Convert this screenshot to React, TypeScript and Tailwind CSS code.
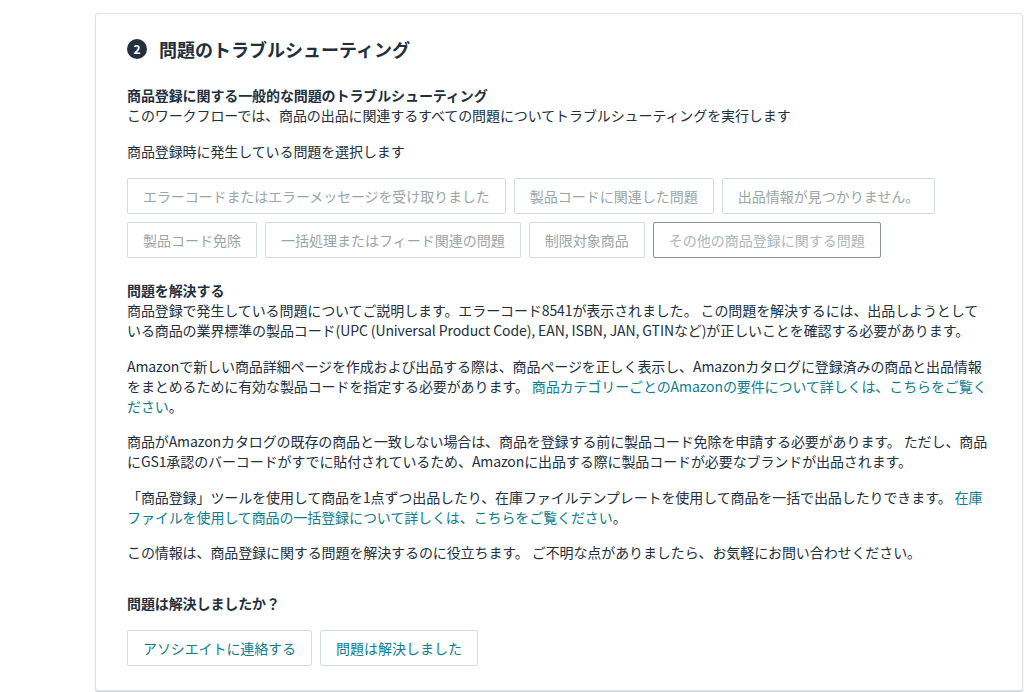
import React from 'react';

const FONT = "font-['Noto_Sans_CJK_JP','Noto_Sans',sans-serif]";

const optionsA = ['製品コードに関連した問題', '出品情報が見つかりません。'];
const optionsB = ['製品コード免除', '一括処理またはフィード関連の問題', '制限対象商品'];

const Option: React.FC<{ label: string; selected?: boolean; tight?: boolean }> = ({ label, selected, tight }) => (
  <button
    className={`h-[36px] px-[15px] rounded-[2px] border text-[14px] leading-[20px] whitespace-nowrap bg-white ${
      tight ? 'tracking-[-0.1px]' : 'tracking-normal'
    } ${selected ? 'border-[#879596] text-[#aab7b8]' : 'border-[#d5dbdb] text-[#9aa5a6]'}`}
  >
    {label}
  </button>
);

const A: React.FC<{ children: React.ReactNode }> = ({ children }) => (
  <a className="text-[#0d7d8c]">{children}</a>
);

const App: React.FC = () => {
  return (
    <div className={`w-[1024px] h-[692px] bg-white overflow-hidden pl-[95px] pt-[13px] ${FONT}`}>
      <div className="w-[928px] h-[678px] bg-white border border-[#dfe3e3] rounded-[3px] shadow-[0_1px_1px_rgba(0,28,36,0.2)] pl-[31px] pt-[23px] text-[14px] leading-[20px] tracking-[-0.1px] text-[#16191f]">
        {/* Step header */}
        <div className="flex items-center gap-[12px] h-[24px]">
          <div className="w-[20px] h-[20px] rounded-full bg-[#232f3e] text-white text-[12px] leading-[20px] font-bold text-center">2</div>
          <h2 className="text-[18px] leading-[24px] font-semibold tracking-normal text-[#232f3e]">問題のトラブルシューティング</h2>
        </div>

        <div className="mt-[24px]">
          <div className="font-bold text-[#232f3e]">商品登録に関する一般的な問題のトラブルシューティング</div>
          <div className="text-[#232f3e]">このワークフローでは、商品の出品に関連するすべての問題についてトラブルシューティングを実行します</div>
        </div>

        <p className="mt-[16px] text-[#232f3e]">商品登録時に発生している問題を選択します</p>

        <div className="mt-[17px] flex flex-col gap-[8px]">
          <div className="flex gap-[8px]">
            <Option label="エラーコードまたはエラーメッセージを受け取りました" tight />
            {optionsA.map(o => <Option key={o} label={o} />)}
          </div>
          <div className="flex gap-[8px]">
            {optionsB.map(o => <Option key={o} label={o} />)}
            <Option label="その他の商品登録に関する問題" selected />
          </div>
        </div>

        {/* Answer */}
        <div className="mt-[22px] text-[#232f3e] space-y-[15.5px]">
          <div>
            <div className="font-bold">問題を解決する</div>
            商品登録で発生している問題についてご説明します。エラーコード8541が表示されました。 この問題を解決するには、出品しようとして<br />
            いる商品の業界標準の製品コード(UPC (Universal Product Code), EAN, ISBN, JAN, GTINなど)が正しいことを確認する必要があります。
          </div>
          <div>
            Amazonで新しい商品詳細ページを作成および出品する際は、商品ページを正しく表示し、Amazonカタログに登録済みの商品と出品情報<br />
            をまとめるために有効な製品コードを指定する必要があります。 <A>商品カテゴリーごとのAmazonの要件について詳しくは、こちらをご覧く<br />ださい</A>。
          </div>
          <div>
            商品がAmazonカタログの既存の商品と一致しない場合は、商品を登録する前に製品コード免除を申請する必要があります。 ただし、商品<br />
            にGS1承認のバーコードがすでに貼付されているため、Amazonに出品する際に製品コードが必要なブランドが出品されます。
          </div>
          <div>
            「商品登録」ツールを使用して商品を1点ずつ出品したり、在庫ファイルテンプレートを使用して商品を一括で出品したりできます。 <A>在庫<br />ファイルを使用して商品の一括登録について詳しくは、こちらをご覧ください</A>。
          </div>
          <div>この情報は、商品登録に関する問題を解決するのに役立ちます。 ご不明な点がありましたら、お気軽にお問い合わせください。</div>
        </div>

        <div className="mt-[31px] font-bold text-[#232f3e]">問題は解決しましたか？</div>

        <div className="mt-[17px] flex gap-[8px]">
          <button className="h-[36px] px-[15px] rounded-[2px] border border-[#d5dbdb] text-[#0d7d8c] bg-white whitespace-nowrap">アソシエイトに連絡する</button>
          <button className="h-[36px] px-[15px] rounded-[2px] border border-[#d5dbdb] text-[#0d7d8c] bg-white whitespace-nowrap tracking-normal">問題は解決しました</button>
        </div>
      </div>
    </div>
  );
};

export default App;
